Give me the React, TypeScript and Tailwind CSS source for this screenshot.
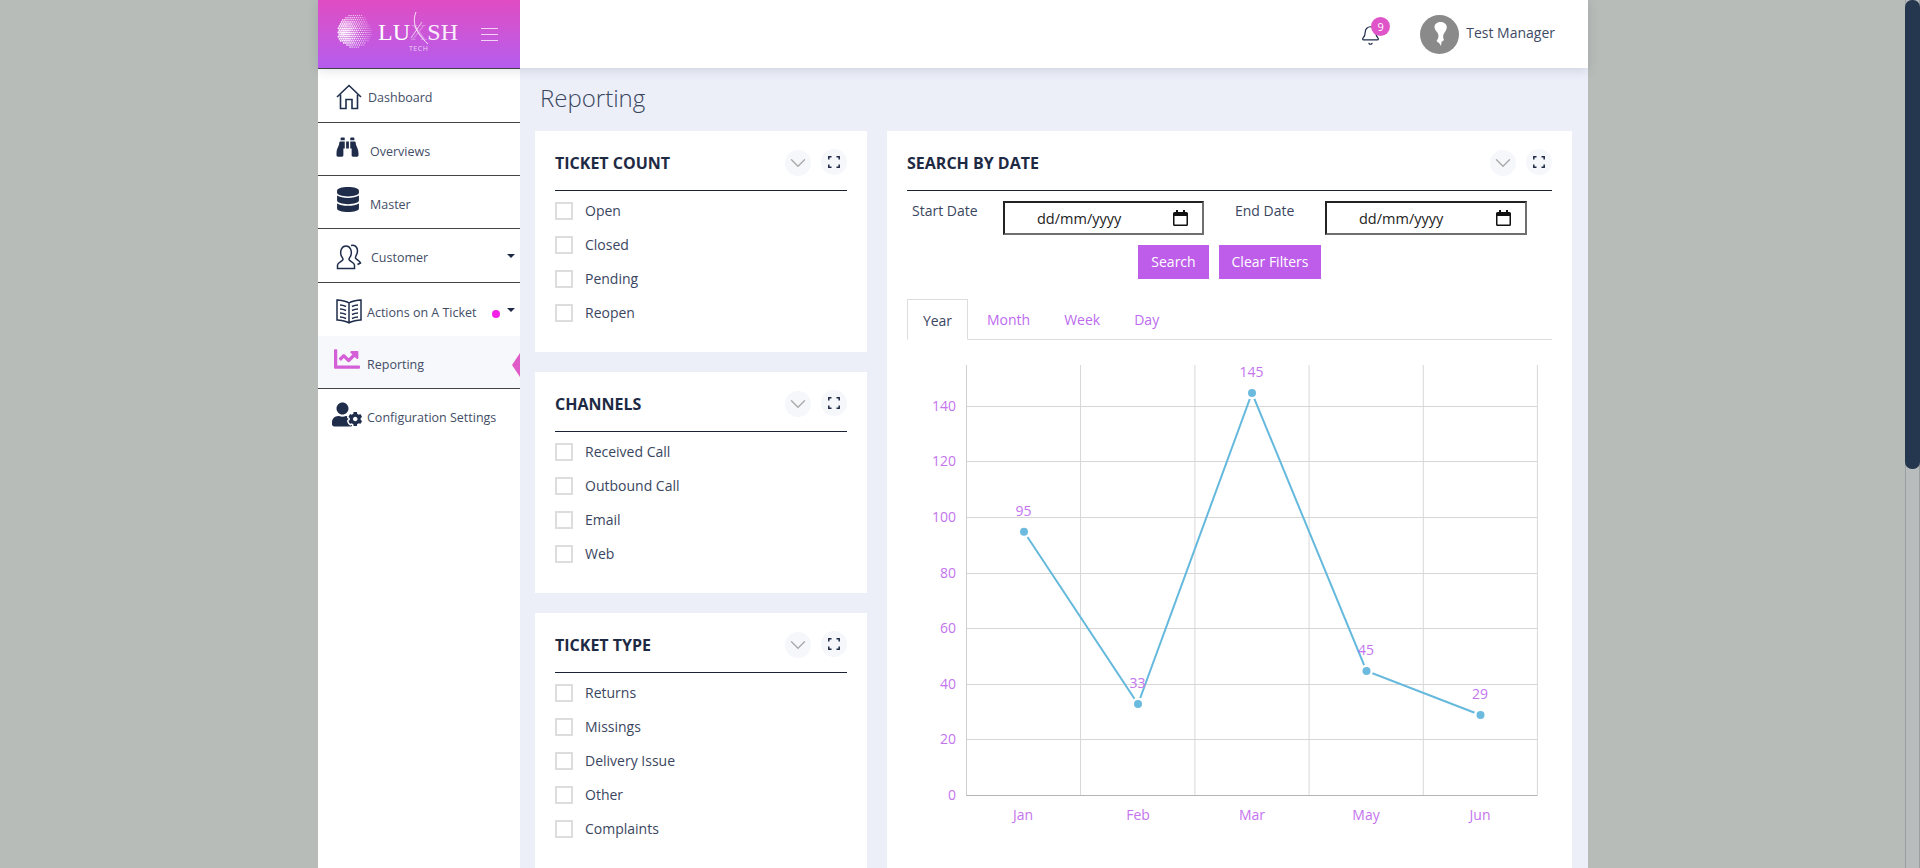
import React from "react";
import { Bell, ChevronDown } from "lucide-react";
import { FaBinoculars, FaDatabase, FaChartLine, FaUserCog } from "react-icons/fa";

const font = { fontFamily: '"Open Sans", sans-serif' };

function Globe() {
  const dots: React.ReactNode[] = [];
  const cx = 17.5, cy = 18, R = 17;
  const step = 2.1;
  for (let row = 0; row < 18; row++) {
    for (let col = 0; col < 18; col++) {
      const x = 0.5 + col * step + (row % 2 ? step / 2 : 0);
      const y = 0.5 + row * step;
      const d = Math.hypot(x - cx, y - cy);
      if (d > R) continue;
      const t = Math.min(1, Math.hypot(x - 6, y - 20) / 30);
      dots.push(<circle key={`${row}-${col}`} cx={x} cy={y} r={1.2 - t * 0.8} fill="#fff" opacity={1 - t * 0.3} />);
    }
  }
  return <svg width="36" height="36" viewBox="0 0 36 36">{dots}</svg>;
}

function HomeIcon() {
  return (
    <svg width="26" height="26" viewBox="0 0 26 26" fill="none" stroke="#1f2d4a" strokeWidth="1.6">
      <path d="M1 13 13 1.5 25 13" />
      <path d="M4.5 10.5V24.5H10V15.5H16V24.5H21.5V10.5" />
    </svg>
  );
}
function CustomerIcon() {
  return (
    <svg width="26" height="26" viewBox="0 0 26 26" fill="none" stroke="#1f2d4a" strokeWidth="1.5">
      <path d="M1.500 24.500V21c.5-3 5-3.500 5.500-5.500.2-1.200-1.500-2.500-2-4.500-1-4 .5-9 5-9s6 5 5 9c-.5 2-2.200 3.300-2 4.500.5 2 5 2.500 5.500 5.500v3.500z" />
      <path d="M15 1.500c5-1.500 7.500 3.500 6 8-.6 2-1.800 3-1.500 4.500.4 1.500 4.500 2.500 5 5l-3 1.500" />
    </svg>
  );
}
function BookIcon() {
  return (
    <svg width="26" height="25" viewBox="0 0 26 25" fill="none" stroke="#1f2d4a" strokeWidth="1.5">
      <path d="M13 4C10 2 5 1.500 1 1v20c4 .5 9 1 12 3 3-2 8-2.500 12-3V1c-4 .5-9 1-12 3v20" />
      <path d="M4 6c2 0 4 .5 6 1.500M4 10c2 0 4 .5 6 1.500M4 14c2 0 4 .5 6 1.500M4 18c2 0 4 .5 6 1.500M22 6c-2 0-4 .5-6 1.500M22 10c-2 0-4 .5-6 1.500M22 14c-2 0-4 .5-6 1.500M22 18c-2 0-4 .5-6 1.500" />
    </svg>
  );
}
function ExpandIcon() {
  return (
    <svg width="12" height="12" viewBox="0 0 12 12" fill="none" stroke="#1e2a44" strokeWidth="1.500">
      <path d="M.8 3.500V.8h2.700M8.500.8h2.700v2.700M11.200 8.500v2.700H8.500M3.500 11.200H.8V8.500" />
    </svg>
  );
}
function CalendarIcon() {
  return (
    <svg width="15" height="16" viewBox="0 0 15 16">
      <path d="M3 0h2v2h5V0h2v2h1.500A1.500 1.500 0 0 1 15 3.500v11a1.500 1.500 0 0 1-1.500 1.500h-12A1.500 1.500 0 0 1 0 14.500v-11A1.500 1.500 0 0 1 1.500 2H3zM1.500 6v8.500h12V6z" fill="#111" />
    </svg>
  );
}
function Caret() {
  return <span className="block w-0 h-0 border-x-[4px] border-x-transparent border-t-[4px] border-t-[#1e2a44]" />;
}

function NavRow({ icon, label, textClass, rowClass, iconClass, children }: { icon: React.ReactNode; label: string; textClass: string; rowClass: string; iconClass: string; children?: React.ReactNode }) {
  return (
    <div className={`relative flex items-center ${rowClass}`}>
      <span className={`flex justify-center ${iconClass}`}>{icon}</span>
      <span className={`text-[12.500px] leading-none text-[#434d66] whitespace-nowrap ${textClass}`}>{label}</span>
      {children}
    </div>
  );
}

function Sidebar() {
  const line = "border-b border-[#444]";
  return (
    <aside className="w-[202px] shrink-0 bg-white flex flex-col border-t border-[#444]">
      <NavRow rowClass={`h-[54px] ${line}`} iconClass="w-[26px] ml-[18px] mt-[2px]" textClass="ml-[6px] mt-[5px]" icon={<HomeIcon />} label="Dashboard" />
      <NavRow rowClass={`h-[53px] ${line}`} iconClass="w-[26px] ml-[16px] mt-[-4px]" textClass="ml-[10px] mt-[6px]" icon={<FaBinoculars className="text-[#1f2d4a] w-[25px] h-[22px]" />} label="Overviews" />
      <NavRow rowClass={`h-[53px] ${line}`} iconClass="w-[24px] ml-[18px] mt-[-5px]" textClass="ml-[10px] mt-[6px]" icon={<FaDatabase className="text-[#1f2d4a] w-[22px] h-[25px]" />} label="Master" />
      <NavRow rowClass={`h-[54px] ${line}`} iconClass="w-[26px] ml-[18px] mt-[2px]" textClass="ml-[9px] mt-[6px]" icon={<CustomerIcon />} label="Customer">
        <span className="absolute right-[5px] top-[25px]"><Caret /></span>
      </NavRow>
      <NavRow rowClass="h-[53px]" iconClass="w-[26px] ml-[18px] mt-[3px]" textClass="ml-[5px] mt-[7px]" icon={<BookIcon />} label="Actions on A Ticket">
        <span className="absolute left-[174px] top-[27px] w-[8px] h-[8px] rounded-full bg-[#f320e6]" />
        <span className="absolute right-[5px] top-[25px]"><Caret /></span>
      </NavRow>
      <NavRow rowClass={`h-[53px] bg-[#f6f8fc] ${line}`} iconClass="w-[26px] ml-[16px] mt-[-6px]" textClass="ml-[7px] mt-[6px]" icon={<FaChartLine className="text-[#d45fd6] w-[26px] h-[26px]" />} label="Reporting">
        <span className="absolute right-0 top-[17px] w-0 h-0 border-y-[12px] border-y-transparent border-r-[8px] border-r-[#df5cc8]" />
      </NavRow>
      <NavRow rowClass="h-[56px]" iconClass="w-[30px] ml-[14px] mt-[-5px]" textClass="ml-[5px] mt-[2px]" icon={<FaUserCog className="text-[#1f2d4a] w-[31px] h-[25px]" />} label="Configuration Settings" />
    </aside>
  );
}

function CardHead({ title }: { title: string }) {
  return (
    <div className="h-[60px] flex items-center border-b border-[#1a2236] shrink-0">
      <h3 className="text-[16px] font-bold text-[#1e2a44] leading-none flex-1 mt-[4px]">{title}</h3>
      <span className="w-[26px] h-[26px] rounded-full bg-[#f6f7fb] flex items-center justify-center mt-[4px]"><ChevronDown className="w-[26px] h-[26px] shrink-0 text-[#aaaaaa]" strokeWidth={1.3} /></span>
      <span className="w-[26px] h-[26px] rounded-full bg-[#f6f7fb] flex items-center justify-center ml-[10px] mt-[2px]"><ExpandIcon /></span>
    </div>
  );
}

function CheckCard({ title, items }: { title: string; items: string[] }) {
  return (
    <section className="bg-white px-5 pb-[30px]">
      <CardHead title={title} />
      <ul className="flex flex-col gap-4 pt-[11px]">
        {items.map((t) => (
          <li key={t} className="flex items-center h-[18px]">
            <span className="w-[18px] h-[18px] border-2 border-[#dddddd]" />
            <span className="ml-3 text-[14px] leading-none text-[#3a4660]">{t}</span>
          </li>
        ))}
      </ul>
    </section>
  );
}

function DateBox({ className }: { className: string }) {
  return (
    <div className={`h-[34px] flex items-center border-2 border-t-[#222] border-l-[#222] border-r-[#6f6f6f] border-b-[#6f6f6f] ${className}`}>
      <span className="ml-[32px] mt-[2px] text-[14.500px] text-[#222] leading-none">dd/mm/yyyy</span>
      <span className="ml-auto mr-[14px] flex"><CalendarIcon /></span>
    </div>
  );
}

const points = [
  { x: 1024, y: 531.7, v: 95, m: "Jan", mx: 1023 },
  { x: 1138, y: 704, v: 33, m: "Feb", mx: 1138 },
  { x: 1252, y: 393, v: 145, m: "Mar", mx: 1252 },
  { x: 1366.5, y: 671, v: 45, m: "May", mx: 1366 },
  { x: 1480.5, y: 715, v: 29, m: "Jun", mx: 1480 },
];
const yTicks = [
  [140, 406.5], [120, 461.5], [100, 517.5], [80, 573.5], [60, 628.5], [40, 684.5], [20, 739.5],
] as const;

function Chart() {
  const purple = "#c474ee";
  return (
    <svg viewBox="907 350 645 480" width="645" height="480" className="block" style={font}>
      {yTicks.map(([v, y]) => <line key={v} x1="966" x2="1537" y1={y} y2={y} stroke="#d6d6d6" />)}
      {[1080.5, 1194.9, 1309.1, 1423.3, 1537.4].map((x) => <line key={x} x1={x} x2={x} y1="365" y2="795" stroke="#d8d8d8" />)}
      <line x1="966.5" x2="966.5" y1="365" y2="795" stroke="#cfcfcf" />
      <line x1="966" x2="1537.500" y1="795.5" y2="795.5" stroke="#b5b5b5" />
      <polyline points={points.map((p) => `${p.x},${p.y}`).join(" ")} fill="none" stroke="#65b9dc" strokeWidth="2" />
      {points.map((p) => (
        <g key={p.m}>
          <circle cx={p.x} cy={p.y} r="6.500" fill="#fff" />
          <circle cx={p.x} cy={p.y} r="4" fill="#6cbbdf" />
          <text x={p.x - 0.500} y={p.y - 16} textAnchor="middle" fontSize="14" fill={purple}>{p.v}</text>
          <text x={p.mx} y="820" textAnchor="middle" fontSize="14" fill={purple}>{p.m}</text>
        </g>
      ))}
      {yTicks.map(([v, y]) => <text key={v} x="956" y={y + 4.500} textAnchor="end" fontSize="14" fill={purple}>{v}</text>)}
      <text x="956" y="800" textAnchor="end" fontSize="14" fill={purple}>0</text>
    </svg>
  );
}

function SearchCard() {
  const tab = "px-[15px] pt-[2px] mr-[2px] border border-transparent h-[40px] flex items-center text-[14px] leading-none";
  return (
    <section className="flex-1 bg-white px-5 pb-[60px] min-w-0">
      <CardHead title="SEARCH BY DATE" />
      <div className="flex items-start mt-[10px]">
        <span className="ml-[5px] w-[91px] text-[14px] leading-none text-[#3a4660] mt-[3px]">Start Date</span>
        <DateBox className="w-[201px]" />
        <span className="ml-[31px] w-[90px] text-[14px] leading-none text-[#3a4660] mt-[3px]">End Date</span>
        <DateBox className="w-[202px]" />
      </div>
      <div className="flex justify-center gap-[10px] mt-[10px]">
        <button className="h-[34px] w-[71px] bg-[#bd5de9] text-white text-[14px] leading-none">Search</button>
        <button className="h-[34px] w-[102px] bg-[#bd5de9] text-white text-[14px] leading-none">Clear Filters</button>
      </div>
      <div className="flex border-b border-[#dddddd] mt-5 h-[41px]">
        <div className="w-[61px] pt-[2px] mr-[3px] justify-center border border-[#dddddd] border-b-white h-[41px] flex items-center text-[14px] leading-none text-[#3a4660] bg-white">Year</div>
        <div className={`${tab} text-[#bd6bf0]`}>Month</div>
        <div className={`${tab} text-[#bd6bf0]`}>Week</div>
        <div className={`${tab} text-[#bd6bf0]`}>Day</div>
      </div>
      <div className="mt-[10px]"><Chart /></div>
    </section>
  );
}

export default function App() {
  return (
    <div className="h-[868px] overflow-hidden flex bg-[#b7bcb8]" style={font}>
      <div className="w-[1270px] ml-[318px] flex flex-col shrink-0">
        <header className="h-[68px] flex shrink-0 bg-white shadow-[0_2px_10px_rgba(60,70,100,0.18)] z-10">
          <div className="w-[202px] shrink-0 flex items-center bg-gradient-to-b from-[#e04bc2] to-[#b45cee]">
            <span className="ml-[19px] flex mt-[-6px]"><Globe /></span>
            <div className="relative ml-[5px] mt-[-4px] w-[80px] whitespace-nowrap text-[24px] leading-none text-white" style={{ fontFamily: '"Liberation Serif", serif' }}>
              <span>LU</span><span className="text-white/30">X</span><span className="text-white/90">SH</span>
              <svg className="absolute left-[28px] top-[-8px]" width="30" height="38" viewBox="0 0 30 38" fill="none" stroke="#fff">
                <path d="M10 0C6 10 9 20 22 32" strokeWidth="1" opacity=".85" />
                <path d="M16 10 5 26" strokeWidth=".8" opacity=".85" />
              </svg>
              <div className="absolute left-[31px] top-[25px] text-[7px] leading-none tracking-[0.5px] text-white/70" style={font}>TECH</div>
            </div>
            <div className="ml-[23px] w-[17px] flex flex-col gap-[5px]">
              <span className="h-px bg-white/75" /><span className="h-px bg-white/75" /><span className="h-px bg-white/75" />
            </div>
          </div>
          <div className="flex-1 flex items-center justify-end">
            <div className="relative flex mr-[39px] mt-[3px]">
              <Bell className="w-[21px] h-[21px] text-[#1f2d4a]" strokeWidth={1.4} />
              <span className="absolute left-[11px] top-[-8px] w-[19px] h-[19px] rounded-full bg-[#df55c9] text-white text-[11px] leading-none flex items-center justify-center">9</span>
            </div>
            <svg width="39" height="39" viewBox="0 0 39 39">
              <circle cx="19.500" cy="19.500" r="19.500" fill="#8a8a8a" />
              <path d="M20.500 7c4 0 6.500 2.500 6.300 5.500-.2 3-2.300 4.500-3.300 7-.7 2-.3 4 .5 5.500l-2.500 2-.5 4-1.500-2.500-3-2.500c1.500-2 2.300-4 1.800-6.500-.5-2.500-3.500-4-3.800-7C14.300 9.500 16.500 7 20.500 7z" fill="#fff" />
            </svg>
            <span className="ml-[7px] mr-[33px] text-[14px] leading-none text-[#3d4a63] mt-[-2px]">Test Manager</span>
          </div>
        </header>
        <div className="flex-1 flex min-h-0">
          <Sidebar />
          <main className="flex-1 bg-[#eceff8] pl-[15px] pr-[16px] overflow-hidden">
            <h1 className="text-[24px] font-light leading-none text-[#3a4660] ml-[5px] pt-[18px] h-[63px]">Reporting</h1>
            <div className="flex gap-5 items-start">
              <div className="w-[332px] shrink-0 flex flex-col gap-5">
                <CheckCard title="TICKET COUNT" items={["Open", "Closed", "Pending", "Reopen"]} />
                <CheckCard title="CHANNELS" items={["Received Call", "Outbound Call", "Email", "Web"]} />
                <CheckCard title="TICKET TYPE" items={["Returns", "Missings", "Delivery Issue", "Other", "Complaints"]} />
              </div>
              <SearchCard />
            </div>
          </main>
        </div>
      </div>
      <div className="flex-1" />
      <div className="w-[15px] shrink-0 bg-[#b9bcbd] border-x border-[#9a9fa0]">
        <div className="h-[469px] -mx-px bg-[#25364f] rounded-[7px]" />
      </div>
    </div>
  );
}
